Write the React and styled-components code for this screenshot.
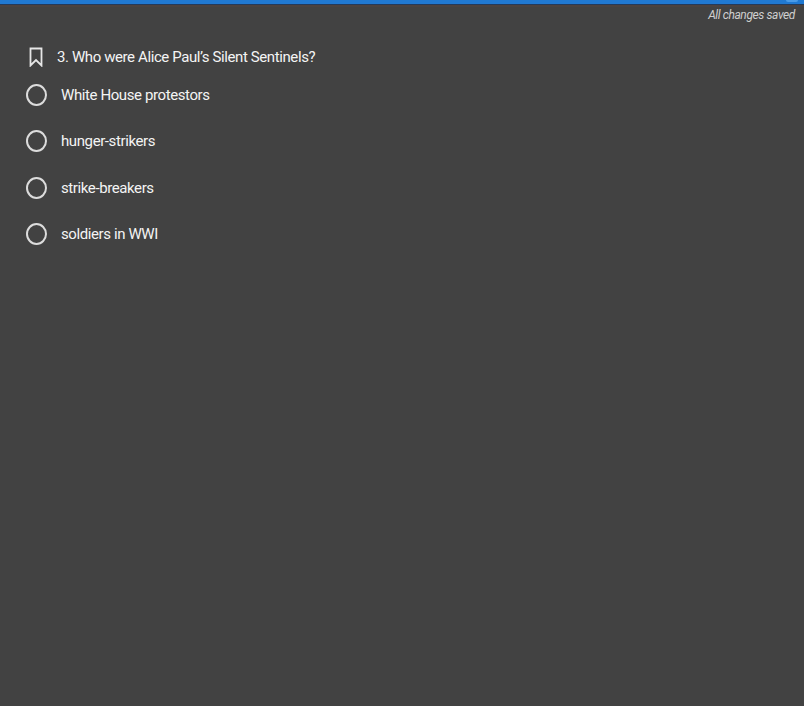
import React from 'react';
import styled, { createGlobalStyle } from 'styled-components';

const GlobalStyle = createGlobalStyle`
    html, body {
        margin: 0;
        padding: 0;
        background: #424242;
        font-family: Roboto, 'Liberation Sans', sans-serif;
    }
`;

const Page = styled.div`
    min-height: 706px;
    background: #424242;
    color: #f4f4f4;
`;

const TopBar = styled.div`
    position: relative;
    height: 4px;
    background: #2079d2;
    border-bottom: 1px solid #243a5a;
    box-shadow: 0 2px 0 #4a4240;
`;

// little lighter tab peeking in at the top right corner
const TopTab = styled.span`
    position: absolute;
    right: 6px;
    top: 0;
    width: 12px;
    height: 2px;
    border-radius: 0 0 3px 3px;
    background: #4a9be8;
`;

const SaveStatus = styled.div`
    text-align: right;
    padding: 3px 9px 0 0;
    font-size: 12px;
    letter-spacing: -0.4px;
    font-style: italic;
    color: #cfcfcf;
    line-height: 14px;
`;

const Question = styled.div`
    display: flex;
    align-items: center;
    gap: 14px;
    padding: 23px 0 0 29px;
`;

const QuestionText = styled.div`
    font-size: 15px;
    letter-spacing: -0.4px;
    line-height: 24px;
`;

const Options = styled.div`
    display: flex;
    flex-direction: column;
    gap: 22.3px;
    padding: 14px 0 0 26px;
`;

const Option = styled.label`
    display: flex;
    align-items: center;
    gap: 14px;
    font-size: 15px;
    letter-spacing: -0.4px;
    line-height: 24px;
    cursor: pointer;
`;

const Radio = styled.span`
    width: 17px;
    height: 18px;
    border-radius: 50%;
    border: 2px solid #dcdcdc;
    box-sizing: content-box;
`;

const Bookmark = () => (
    <svg width="14" height="20" viewBox="0 0 14 20" fill="none">
        <path d="M1.5 1.5h11v17l-5.5-5.5-5.5 5.5z" stroke="#e6e6e6" strokeWidth="1.8" strokeLinejoin="miter" />
    </svg>
);

const choices = ['White House protestors', 'hunger-strikers', 'strike-breakers', 'soldiers in WWI'];

const App = () => {
    return (
        <>
            <GlobalStyle />
            <Page>
                <TopBar>
                    <TopTab />
                </TopBar>
                <SaveStatus>All changes saved</SaveStatus>
                <Question>
                    <Bookmark />
                    <QuestionText>3. Who were Alice Paul’s Silent Sentinels?</QuestionText>
                </Question>
                <Options>
                    {choices.map((c) => (
                        <Option key={c}>
                            <Radio />
                            {c}
                        </Option>
                    ))}
                </Options>
            </Page>
        </>
    );
};

export default App;
